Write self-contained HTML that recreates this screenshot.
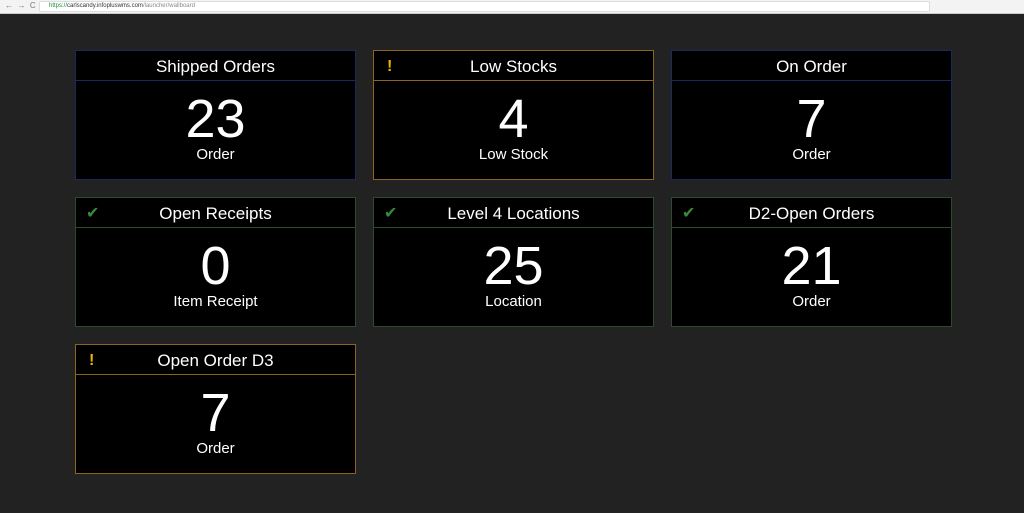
<!DOCTYPE html>
<html><head><style>
*{margin:0;padding:0;box-sizing:border-box}
body{width:1024px;height:513px;background:#222;font-family:"Liberation Sans",sans-serif;position:relative;overflow:hidden}
.bar{position:absolute;left:0;top:0;width:1024px;height:14px;background:#f3f3f3;border-bottom:1px solid #ccc}
.url{position:absolute;left:39px;top:1px;width:891px;height:11px;background:#fff;border:1px solid #ddd;border-radius:2px;font-size:6px;line-height:9px;padding-left:9px;color:#888}
.url b{font-weight:normal;color:#1a8a3a}.url i{font-style:normal;color:#333}
.card{position:absolute;width:281px;height:130px;background:#000;border:1px solid #1a2a5c;color:#fff;text-align:center}
.card .h{height:30px;border-bottom:1px solid #1a2a5c;font-size:17px;line-height:31px;position:relative}
.card.w,.card.w .h{border-color:#8a6420}
.card.g,.card.g .h{border-color:#2c4a30}
.ic{position:absolute;left:10px;top:0;font-size:16px}
.w .ic{color:#f0b400;font-weight:bold;left:13px}
.g .ic{color:#3a8a3c}
.n{font-size:54px;line-height:54px;margin-top:11px}
.l{font-size:15px;line-height:18px;margin-top:0px}
</style></head><body>
<div class="bar"><span style="position:absolute;left:5px;top:1px;font-size:8px;color:#777">←&nbsp;&nbsp;→&nbsp;&nbsp;C</span><div class="url"><b>https://</b><i>carlscandy.infopluswms.com</i>/launcher/wallboard</div></div>
<div class="card" style="left:75px;top:50px"><div class="h">Shipped Orders</div><div class="n">23</div><div class="l">Order</div></div>
<div class="card w" style="left:373px;top:50px"><div class="h"><span class="ic">!</span>Low Stocks</div><div class="n">4</div><div class="l">Low Stock</div></div>
<div class="card" style="left:671px;top:50px"><div class="h">On Order</div><div class="n">7</div><div class="l">Order</div></div>
<div class="card g" style="left:75px;top:197px"><div class="h"><span class="ic">✔</span>Open Receipts</div><div class="n">0</div><div class="l">Item Receipt</div></div>
<div class="card g" style="left:373px;top:197px"><div class="h"><span class="ic">✔</span>Level 4 Locations</div><div class="n">25</div><div class="l">Location</div></div>
<div class="card g" style="left:671px;top:197px"><div class="h"><span class="ic">✔</span>D2-Open Orders</div><div class="n">21</div><div class="l">Order</div></div>
<div class="card w" style="left:75px;top:344px"><div class="h"><span class="ic">!</span>Open Order D3</div><div class="n">7</div><div class="l">Order</div></div>
</body></html>
